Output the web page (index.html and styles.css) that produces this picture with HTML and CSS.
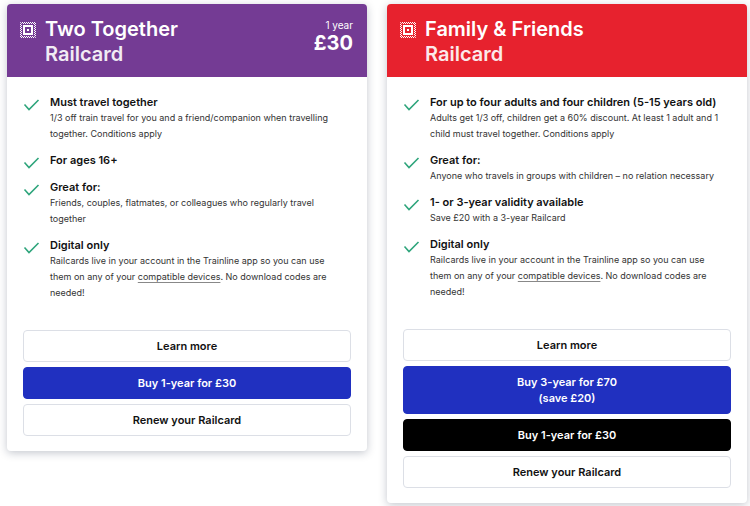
FILE: index.html
```
<!DOCTYPE html>
<html lang="en">
<head>
    <meta charset="utf-8">
    <meta name="viewport" content="width=device-width, initial-scale=1">
    <title>Railcards</title>
    <link rel="stylesheet" href="styles.css">
</head>
<body>
    <svg class="sprite" aria-hidden="true">
        <symbol id="railcard" viewBox="0 0 16 16">
            <g fill="none" stroke="currentColor">
                <rect x=".5" y=".5" width="15" height="15" stroke-dasharray="1 1" stroke-dashoffset=".5"/>
                <rect x="1.5" y="1.5" width="13" height="13" stroke-dasharray="1 1" stroke-dashoffset=".5"/>
                <rect x="4" y="4" width="8" height="8" stroke-width="2"/>
            </g>
            <rect x="7" y="7" width="2" height="2" fill="currentColor"/>
        </symbol>
        <symbol id="check" viewBox="0 0 16 12">
            <path d="M1 5.5 L5.5 10.5 L15 1" fill="none" stroke="currentColor" stroke-width="1.6"/>
        </symbol>
    </svg>

    <main class="cards">
        <section class="card">
            <header class="card-header purple">
                <svg class="logo"><use href="#railcard"/></svg>
                <h2>Two Together<br><span>Railcard</span></h2>
                <div class="price">
                    <span class="term">1 year</span>
                    <strong>£30</strong>
                </div>
            </header>
            <ul class="features">
                <li>
                    <svg class="check"><use href="#check"/></svg>
                    <div>
                        <h3>Must travel together</h3>
                        <p>1/3 off train travel for you and a friend/companion when travelling together. Conditions apply</p>
                    </div>
                </li>
                <li>
                    <svg class="check"><use href="#check"/></svg>
                    <div>
                        <h3>For ages 16+</h3>
                    </div>
                </li>
                <li>
                    <svg class="check"><use href="#check"/></svg>
                    <div>
                        <h3>Great for:</h3>
                        <p>Friends, couples, flatmates, or colleagues who regularly travel together</p>
                    </div>
                </li>
                <li>
                    <svg class="check"><use href="#check"/></svg>
                    <div>
                        <h3>Digital only</h3>
                        <p>Railcards live in your account in the Trainline app so you can use them on any of your <a href="#">compatible devices</a>. No download codes are needed!</p>
                    </div>
                </li>
            </ul>
            <div class="actions">
                <button type="button">Learn more</button>
                <button type="button" class="blue">Buy 1-year for £30</button>
                <button type="button">Renew your Railcard</button>
            </div>
        </section>

        <section class="card">
            <header class="card-header red">
                <svg class="logo"><use href="#railcard"/></svg>
                <h2>Family &amp; Friends<br><span>Railcard</span></h2>
            </header>
            <ul class="features">
                <li>
                    <svg class="check"><use href="#check"/></svg>
                    <div>
                        <h3>For up to four adults and four children (5-15 years old)</h3>
                        <p>Adults get 1/3 off, children get a 60% discount. At least 1 adult and 1 child must travel together. Conditions apply</p>
                    </div>
                </li>
                <li>
                    <svg class="check"><use href="#check"/></svg>
                    <div>
                        <h3>Great for:</h3>
                        <p>Anyone who travels in groups with children – no relation necessary</p>
                    </div>
                </li>
                <li>
                    <svg class="check"><use href="#check"/></svg>
                    <div>
                        <h3>1- or 3-year validity available</h3>
                        <p>Save £20 with a 3-year Railcard</p>
                    </div>
                </li>
                <li>
                    <svg class="check"><use href="#check"/></svg>
                    <div>
                        <h3>Digital only</h3>
                        <p>Railcards live in your account in the Trainline app so you can use them on any of your <a href="#">compatible devices</a>. No download codes are needed!</p>
                    </div>
                </li>
            </ul>
            <div class="actions">
                <button type="button">Learn more</button>
                <button type="button" class="blue">Buy 3-year for £70<br>(save £20)</button>
                <button type="button" class="black">Buy 1-year for £30</button>
                <button type="button">Renew your Railcard</button>
            </div>
        </section>
    </main>
</body>
</html>
```

FILE: styles.css
```
* {
  box-sizing: border-box;
}

body {
  margin: 0;
  font-family: Inter, "Liberation Sans", sans-serif;
  background-color: #fff;
  color: #111;
}

h2, h3, p, ul {
  margin: 0;
  padding: 0;
}

.sprite {
  display: none;
}

.cards {
  display: grid;
  grid-template-columns: 1fr 1fr;
  gap: 20px;
  align-items: start;
  padding: 4px 3px 3px 7px;
}

.card {
  background-color: #fff;
  border-radius: 4px;
  box-shadow: 0 2px 8px rgba(20, 30, 60, 0.25);
  overflow: hidden;
}

.card-header {
  display: flex;
  gap: 9px;
  padding: 13px 14px 10px 13px;
  color: #fff;
}

.purple {
  background-color: #743b94;
}

.red {
  background-color: #e7222e;
}

.logo {
  flex: none;
  width: 16px;
  height: 16px;
  margin-top: 5px;
}

h2 {
  font-size: 20px;
  font-weight: 600;
  line-height: 25px;
}

h2 span {
  opacity: 0.9;
}

.price {
  display: flex;
  flex-direction: column;
  margin-left: auto;
  text-align: right;
}

.term {
  font-size: 10px;
  line-height: 16px;
}

.price strong {
  font-size: 20px;
  font-weight: 700;
  line-height: 20px;
}

.features {
  display: flex;
  flex-direction: column;
  gap: 10px;
  padding: 17px 21px 0 16px;
  list-style: none;
}

.features li {
  display: flex;
  gap: 10px;
}

.check {
  flex: none;
  width: 17px;
  height: 12px;
  margin-top: 5px;
  color: #2fa57c;
}

h3 {
  font-size: 11px;
  font-weight: 600;
  line-height: 16px;
}

.features p {
  font-size: 9px;
  line-height: 16px;
  color: #333;
}

.features a {
  color: inherit;
  text-decoration: underline;
  text-decoration-color: #888;
  text-decoration-thickness: 1px;
  text-underline-offset: 2px;
  text-decoration-skip-ink: none;
}

.actions {
  display: flex;
  flex-direction: column;
  gap: 5px;
  padding: 29px 16px 15px;
}

button {
  padding: 7px 16px;
  font-family: inherit;
  font-size: 11px;
  font-weight: 600;
  line-height: 16px;
  color: #111;
  background-color: #fff;
  border: 1px solid #dcdfe6;
  border-radius: 4px;
  cursor: pointer;
}

.blue {
  color: #fff;
  background-color: #2030c0;
  border-color: #2030c0;
}

.black {
  color: #fff;
  background-color: #000;
  border-color: #000;
}
```
